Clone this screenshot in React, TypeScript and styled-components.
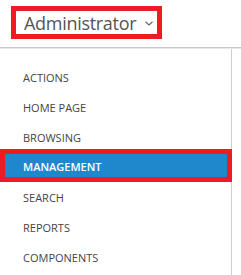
import React from 'react';
import styled, {createGlobalStyle} from 'styled-components';

const items = ['ACTIONS', 'HOME PAGE', 'BROWSING', 'MANAGEMENT', 'SEARCH', 'REPORTS', 'COMPONENTS'];
const ACTIVE = 'MANAGEMENT';

const App = () => {
    return (
        <Page>
            <GlobalStyle/>
            <Header>
                <RoleBox>
                    <RoleName>Administrator</RoleName>
                    <Chevron viewBox="0 0 8 5" width="8" height="5">
                        <path d="M0.5 0.8 L4 4 L7.5 0.8" fill="none" stroke="#666" strokeWidth="1.2"/>
                    </Chevron>
                </RoleBox>
            </Header>
            <Sidebar>
                <Menu>
                    {items.map(item => (
                        <MenuItem key={item} active={item === ACTIVE}>{item}</MenuItem>
                    ))}
                </Menu>
            </Sidebar>
        </Page>
    )
}

export default App;

const GlobalStyle = createGlobalStyle`
  body {
    margin: 0;
    background: #fff;
    font-family: "Open Sans", "Noto Sans", sans-serif;
  }
`;

const Page = styled.div`
  display: flex;
  flex-flow: column;
  height: 275px;
`;

const Header = styled.div`
  height: 48px;
  box-sizing: border-box;
  padding: 6px 0 0 11px;
  border-bottom: 1px solid #c9c9c9;
  box-shadow: 0 1px 0 #e8e8e8;
`;

const RoleBox = styled.div`
  display: flex;
  align-items: center;
  width: 151px;
  height: 33px;
  box-sizing: border-box;
  border: 5px solid #ed1c24;
  padding-left: 8px;
`;

const RoleName = styled.span`
  font-size: 18px;
  color: #555;
  letter-spacing: -0.3px;
`;

const Chevron = styled.svg`
  margin-left: 9px;
  margin-top: 2px;
`;

const Sidebar = styled.div`
  flex: 1 1 auto;
  width: 231px;
  border-right: 1px solid #cfcfcf;
  margin-top: 1px;
`;

const Menu = styled.ul`
  list-style: none;
  margin: 0;
  padding: 13px 0 0;
  display: flex;
  flex-flow: column;
`;

const MenuItem = styled.li<{active?: boolean}>`
  height: ${props => props.active ? '33px' : '30px'};
  margin-top: ${props => props.active ? '-3px' : '0'};
  margin-right: ${props => props.active ? '-1px' : '0'};
  box-sizing: border-box;
  display: flex;
  align-items: center;
  padding-left: ${props => props.active ? '18px' : '23px'};
  padding-top: ${props => props.active ? '2px' : '0'};
  font-size: 11px;
  font-weight: ${props => props.active ? 600 : 400};
  color: ${props => props.active ? '#fff' : '#444'};
  background: ${props => props.active ? '#1f88cd' : 'transparent'};
  border: ${props => props.active ? '5px solid #ed1c24' : 'none'};
`;
